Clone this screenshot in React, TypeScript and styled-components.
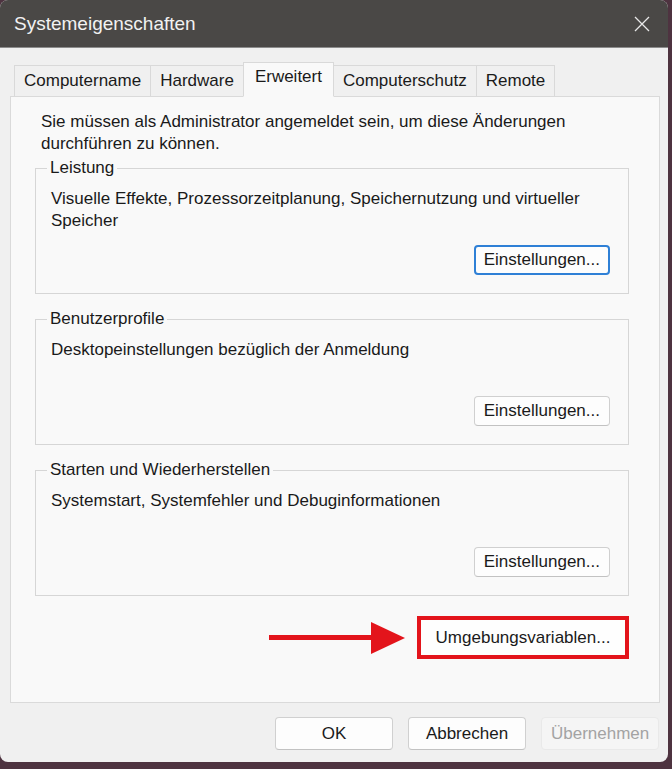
import styled, { createGlobalStyle } from 'styled-components';

const GlobalStyle = createGlobalStyle`
	html, body {
		margin: 0;
		padding: 0;
		background: #4e3340;
	}
	body {
		font-family: 'Liberation Sans', Arial, sans-serif;
		color: #1a1a1a;
	}
`;

const Window = styled.div`
	width: 668px;
	height: 762px;
	border-radius: 8px;
	overflow: hidden;
	background: #f0f0f0;
	display: flex;
	flex-direction: column;
`;

const TitleBar = styled.div`
	height: 47px;
	flex: none;
	background: #4a4846;
	border-bottom: 1px solid #8c8c8c;
	display: flex;
	align-items: center;
	justify-content: space-between;
	padding: 0 18px 0 14px;
`;

const Title = styled.div`
	font-size: 19px;
	color: #f2f2f2;
`;

const Body = styled.div`
	flex: 1;
	display: flex;
	flex-direction: column;
	padding: 14px 8px 0 10px;
`;

const TabRow = styled.div`
	display: flex;
	align-items: flex-end;
	height: 34px;
	padding-left: 4px;
	position: relative;
	z-index: 1;
`;

const Tab = styled.div<{ $active?: boolean }>`
	height: ${(p) => (p.$active ? 35 : 31)}px;
	margin-bottom: ${(p) => (p.$active ? -1 : 0)}px;
	padding: 0 ${(p) => (p.$active ? 11 : 9)}px;
	padding-bottom: ${(p) => (p.$active ? 6 : 0)}px;
	display: flex;
	align-items: center;
	box-sizing: border-box;
	font-size: 17px;
	color: #1a1a1a;
	background: ${(p) => (p.$active ? '#f9f9f9' : '#f0f0f0')};
	border: 1px solid #d9d9d9;
	border-bottom: ${(p) => (p.$active ? '1px solid #f9f9f9' : 'none')};
	& + & {
		margin-left: -1px;
	}
`;

const Panel = styled.div`
	width: 650px;
	height: 607px;
	box-sizing: border-box;
	background: #f9f9f9;
	border: 1px solid #dadada;
	padding: 14px 30px 0 24px;
	display: flex;
	flex-direction: column;
`;

const Intro = styled.p`
	margin: 0 0 3px 6px;
	font-size: 17px;
	line-height: 22px;
`;

const Group = styled.fieldset`
	margin: 0 0 15px 0;
	padding: 0 18px 18px 15px;
	border: 1px solid #d6d6d6;
	box-sizing: border-box;
`;

const Legend = styled.legend`
	font-size: 17px;
	line-height: 20px;
	padding: 0 3px;
	margin-left: -4px;
`;

const Description = styled.div`
	margin-top: 10px;
	font-size: 17px;
	line-height: 22px;
	height: 44px;
`;

const ButtonRow = styled.div`
	display: flex;
	justify-content: flex-end;
	align-items: center;
	margin-top: 13px;
`;

const Button = styled.button<{ $focused?: boolean; $width?: number; $height?: number }>`
	font-family: 'Liberation Sans', Arial, sans-serif;
	font-size: 17px;
	height: ${(p) => p.$height ?? 30}px;
	width: ${(p) => (p.$width ? `${p.$width}px` : 'auto')};
	padding: 0 ${(p) => (p.$focused ? 8 : 9)}px;
	color: #1a1a1a;
	background: #fdfdfd;
	border: ${(p) => (p.$focused ? '2px solid #2f80d6' : '1px solid #d0d0d0')};
	border-bottom-color: ${(p) => (p.$focused ? '#2f80d6' : '#c2c2c2')};
	border-radius: 4px;
	cursor: default;
	&:disabled {
		color: #a3a3a3;
		background: #f5f5f5;
		border-color: #e9e9e9;
	}
`;

const EnvRow = styled.div`
	display: flex;
	justify-content: flex-end;
	align-items: center;
	margin-top: 5px;
`;

const Highlight = styled.div`
	border: 4px solid #e3141b;
	display: flex;
	margin-left: 10px;
`;

const EnvButton = styled.div`
	width: 204px;
	height: 35px;
	background: #fefefe;
	display: flex;
	align-items: center;
	justify-content: center;
	font-size: 17px;
`;

const Footer = styled.div`
	display: flex;
	justify-content: flex-end;
	gap: 15px;
	padding: 14px 1px 0 0;
	width: 650px;
	box-sizing: border-box;
`;

const CloseIcon = () => (
	<svg width="16" height="16" viewBox="0 0 16 16">
		<path d="M1 1 L15 15 M15 1 L1 15" stroke="#e8e8e8" strokeWidth="1.3" fill="none" />
	</svg>
);

const Arrow = () => (
	<svg width="138" height="36" viewBox="0 0 138 36">
		<rect x="0" y="15" width="108" height="5" fill="#e3141b" />
		<path d="M102 2 L136 18 L102 34 Z" fill="#e3141b" />
	</svg>
);

export default function App() {
	return (
		<>
			<GlobalStyle />
			<Window>
				<TitleBar>
					<Title>Systemeigenschaften</Title>
					<CloseIcon />
				</TitleBar>
				<Body>
					<TabRow>
						<Tab>Computername</Tab>
						<Tab>Hardware</Tab>
						<Tab $active>Erweitert</Tab>
						<Tab>Computerschutz</Tab>
						<Tab>Remote</Tab>
					</TabRow>
					<Panel>
						<Intro>
							Sie müssen als Administrator angemeldet sein, um diese Änderungen
							<br />
							durchführen zu können.
						</Intro>
						<Group>
							<Legend>Leistung</Legend>
							<Description>
								Visuelle Effekte, Prozessorzeitplanung, Speichernutzung und virtueller
								<br />
								Speicher
							</Description>
							<ButtonRow>
								<Button $focused>Einstellungen...</Button>
							</ButtonRow>
						</Group>
						<Group>
							<Legend>Benutzerprofile</Legend>
							<Description>Desktopeinstellungen bezüglich der Anmeldung</Description>
							<ButtonRow>
								<Button>Einstellungen...</Button>
							</ButtonRow>
						</Group>
						<Group>
							<Legend>Starten und Wiederherstellen</Legend>
							<Description>Systemstart, Systemfehler und Debuginformationen</Description>
							<ButtonRow>
								<Button>Einstellungen...</Button>
							</ButtonRow>
						</Group>
						<EnvRow>
							<Arrow />
							<Highlight>
								<EnvButton>Umgebungsvariablen...</EnvButton>
							</Highlight>
						</EnvRow>
					</Panel>
					<Footer>
						<Button $width={118} $height={33}>OK</Button>
						<Button $width={118} $height={33}>Abbrechen</Button>
						<Button $width={118} $height={33} disabled>
							Übernehmen
						</Button>
					</Footer>
				</Body>
			</Window>
		</>
	);
}
